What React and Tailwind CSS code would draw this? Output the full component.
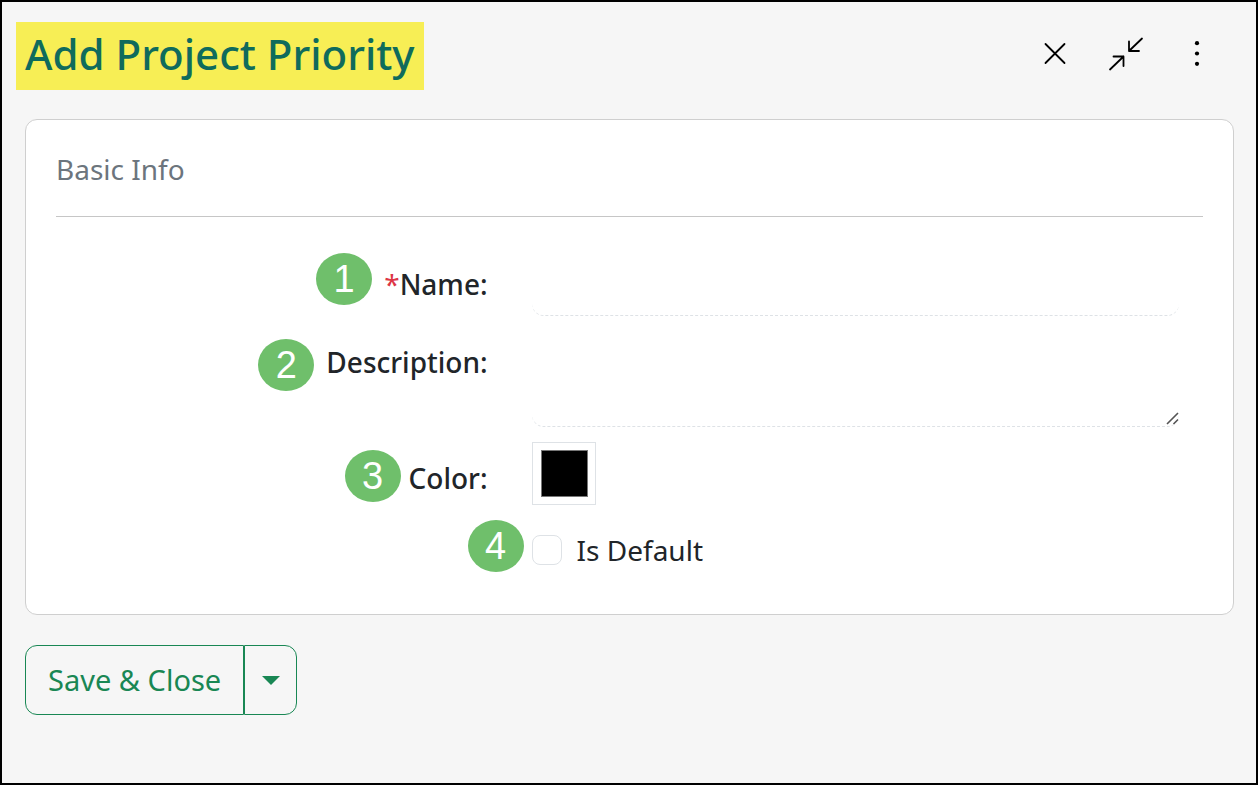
import React, { useState } from "react";

const Badge = ({ number, className }) => (
  <span
    className={`flex h-[52px] w-14 shrink-0 items-center justify-center rounded-[50%] bg-[#6fbf6b] font-['Liberation_Sans',sans-serif] text-[38px] leading-none text-white ${className}`}
  >
    {number}
  </span>
);

const Row = ({
  badge,
  label,
  htmlFor,
  required,
  badgeClass,
  labelClass = "pt-[10px]",
  children,
}) => (
  <div className="grid grid-cols-[2fr_3fr] gap-11">
    <div className="flex items-start justify-end">
      <Badge number={badge} className={badgeClass} />
      {label && (
        <label
          htmlFor={htmlFor}
          className={`text-[28px] leading-[42px] font-medium ${labelClass}`}
        >
          {required && <span className="font-normal text-[#dc3545]">*</span>}
          {label}:
        </label>
      )}
    </div>
    {children}
  </div>
);

const fieldClass =
  "block w-full rounded-xl border-b border-dashed border-[#dee2e6] bg-transparent px-3 text-[28px] outline-none";

const App = () => {
  const [form, setForm] = useState({
    name: "",
    description: "",
    color: "#000000",
    isDefault: false,
  });

  const update = (key, value) => setForm({ ...form, [key]: value });

  return (
    <main className="min-h-screen border-2 border-black bg-[#f6f6f6] pb-[68px] font-['Noto_Sans',sans-serif] text-[#212529]">
      {/* Header */}
      <header className="flex items-start justify-between pt-5 pr-[35px] pl-[14px]">
        <h1 className="flex h-[68px] items-center bg-[#f7ee55] px-[9px] pb-1 text-[42px] leading-none font-medium text-[#0f6b5c]">
          Add Project Priority
        </h1>
        <div className="flex gap-[23px] pt-2">
          <button type="button" aria-label="Close">
            <svg className="size-12" viewBox="0 0 48 48" fill="none" stroke="#000" strokeWidth="1.8" strokeLinecap="round">
              <path d="M14.500 14l19 19M33.500 14l-19 19" />
            </svg>
          </button>
          <button type="button" aria-label="Collapse">
            <svg className="size-12" viewBox="0 0 48 48" fill="none" stroke="#000" strokeWidth="1.8" strokeLinecap="round" strokeLinejoin="round">
              <path d="M40 8.500L27 21M27 11.500V21h10M8 39.500L21.500 26.500M11.500 26.500h10v9.500" />
            </svg>
          </button>
          <button type="button" aria-label="More options">
            <svg className="size-12" viewBox="0 0 48 48" fill="#000">
              <circle cx="24" cy="13.200" r="2.100" />
              <circle cx="24" cy="23.500" r="2.100" />
              <circle cx="24" cy="33.800" r="2.100" />
            </svg>
          </button>
        </div>
      </header>

      <form className="pr-[22px] pl-[23px]" onSubmit={(e) => e.preventDefault()}>
        <section className="mt-[29px] rounded-xl border border-[#cfcfcf] bg-white px-[30px] pb-[34px]">
          <h2 className="border-b border-[#c6c6c6] pt-7 pb-[26px] text-[28px] leading-[42px] text-[#6c757d]">
            Basic Info
          </h2>

          <div className="flex flex-col gap-[15px] pt-9 pr-6">
            <Row badge="1" label="Name" htmlFor="name" required badgeClass="mr-3">
              <input
                id="name"
                type="text"
                value={form.name}
                onChange={(e) => update("name", e.target.value)}
                className={`${fieldClass} h-[63px]`}
              />
            </Row>

            <Row badge="2" label="Description" htmlFor="description" badgeClass="mt-2 mr-3">
              <div className="relative">
                <textarea
                  id="description"
                  value={form.description}
                  onChange={(e) => update("description", e.target.value)}
                  className={`${fieldClass} h-24 resize-none`}
                />
                {/* Resize grip */}
                <svg className="pointer-events-none absolute right-0 bottom-0 size-4" viewBox="0 0 16 16" stroke="#555" strokeWidth="1.600">
                  <path d="M4 13L15 2M10.500 13L15 8.500" />
                </svg>
              </div>
            </Row>

            <Row
              badge="3"
              label="Color"
              htmlFor="color"
              badgeClass="mt-2 mr-2"
              labelClass="pt-[15px]"
            >
              <input
                id="color"
                type="color"
                value={form.color}
                onChange={(e) => update("color", e.target.value)}
                className="h-[63px] w-16 appearance-none border border-[#dee2e6] bg-white py-[7px] pr-[7px] pl-2 [&::-webkit-color-swatch]:rounded-none [&::-webkit-color-swatch]:border [&::-webkit-color-swatch]:border-[#777] [&::-webkit-color-swatch-wrapper]:p-0"
              />
            </Row>

            <Row badge="4" badgeClass="-mr-9">
              <div className="flex h-[60px] items-center gap-[15px]">
                <input
                  id="isDefault"
                  type="checkbox"
                  checked={form.isDefault}
                  onChange={(e) => update("isDefault", e.target.checked)}
                  className="size-[30px] appearance-none rounded-lg border border-[#dee2e6] bg-white checked:bg-[#198754]"
                />
                <label htmlFor="isDefault" className="text-[28px] leading-[42px]">
                  Is Default
                </label>
              </div>
            </Row>
          </div>
        </section>

        {/* Footer actions */}
        <div className="mt-[30px] flex h-[70px] text-[29px] text-[#198754]">
          <button type="submit" className="rounded-l-xl border border-[#198754] px-[22px]">
            Save &amp; Close
          </button>
          <button
            type="button"
            aria-label="More save options"
            className="flex w-[53px] items-center justify-center rounded-r-xl border border-[#198754]"
          >
            <svg className="h-[9px] w-[18px]" viewBox="0 0 18 9" fill="currentColor">
              <path d="M0 0h18L9 9z" />
            </svg>
          </button>
        </div>
      </form>
    </main>
  );
};

export default App;
